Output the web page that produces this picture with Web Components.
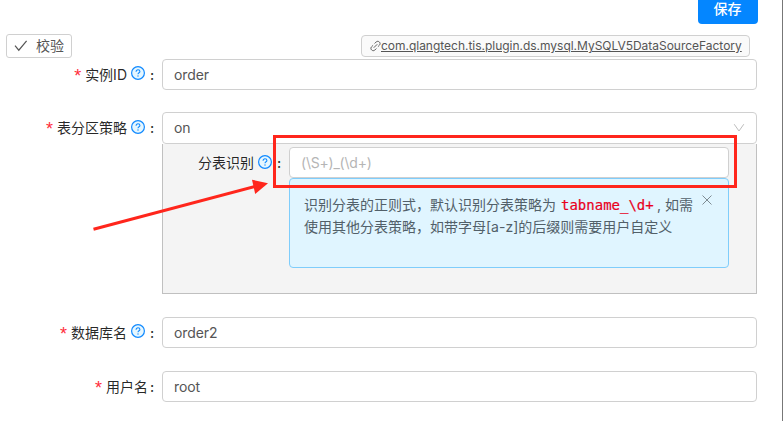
<!DOCTYPE html>
<html lang="zh-CN">
<head>
<meta charset="utf-8">
<title>数据源配置</title>
<style>
html, body { margin: 0; height: 100%; background: #fff; overflow: hidden; }
body { font: 14px/22px Inter, "Noto Sans CJK SC", sans-serif; color: rgba(0,0,0,.85); }
</style>
</head>
<body>
<ds-page></ds-page>
<script>
const define = (name, html) => {
  const t = document.createElement('template');
  t.innerHTML = html;
  customElements.define(name, class extends HTMLElement {
    constructor() {
      super();
      this.attachShadow({ mode: 'open' }).append(t.content.cloneNode(true));
    }
  });
};

define('help-icon', `
<style>:host{display:block;width:14px;height:14px} svg{display:block}</style>
<svg width="14" height="14" viewBox="0 0 14 14" fill="none">
<circle cx="7" cy="7" r="6.4" fill="#e6f7ff" stroke="#1089ff" stroke-width="1.2"/>
<path d="M5.1 5.7C5.1 4.5 5.9 3.8 7 3.8s1.9.7 1.9 1.7C8.9 6.8 7 6.8 7 8.3" stroke="#1089ff" stroke-width="1.1"/>
<circle cx="7" cy="10" r=".7" fill="#1089ff"/></svg>`);

define('text-box', `
<style>:host{display:flex;align-items:center;justify-content:space-between;box-sizing:border-box;height:31px;padding:0 11px;background:#fff;border:1px solid #d0d0d0;border-radius:4px;color:#555;letter-spacing:-.08px}
:host([tall]){height:32px}
:host([hint]){color:#b5b5b5;letter-spacing:-.22px}
svg{display:none}:host([tall]) svg{display:block}</style>
<slot></slot><svg width="12" height="10" viewBox="0 0 12 10" fill="none" stroke="#bdbdbd"><path d="M1.2 1.2 6 8l4.8-6.8"/></svg>`);

define('form-label', `
<style>:host{display:flex;justify-content:flex-end;align-items:center;height:32px;white-space:nowrap;box-sizing:border-box;padding-right:8px}
.star{display:none;color:#ff2d3b;width:7px;margin-right:4px;font:18px/20px "Liberation Sans",sans-serif;padding-top:1px}
:host([required]) .star{display:block}
help-icon{display:none;margin:-4px 3px 0 4px}:host([help]) help-icon{display:block}
:host([low]) help-icon{margin-top:-2px}
.colon{width:4px;margin-left:2px;font-weight:500}</style>
<span class="star">*</span><slot></slot><help-icon></help-icon><span class="colon">:</span>`);

define('form-row', `
<style>:host{display:grid;grid-template-columns:162px 595px}</style>
<slot name="label"></slot><slot></slot>`);

define('check-button', `
<style>:host{display:flex;align-items:center;box-sizing:border-box;width:66px;height:24px;padding-left:7px;gap:8px;border:1px solid #d0d0d0;border-radius:3px;color:#555}svg{flex:none}</style>
<svg width="14" height="12" viewBox="0 0 14 12" fill="none" stroke="#555" stroke-width="1.2"><path d="M1 5.7 4.8 10.2 12.6.9"/></svg><slot></slot>`);

define('save-button', `
<style>:host{display:flex;align-items:center;justify-content:center;box-sizing:border-box;width:60px;height:32px;padding-top:2px;background:#0486ff;color:#fff;border-radius:4px;font-weight:500}span{margin-left:-1px}</style><span><slot></slot></span>`);

define('plugin-tag', `
<style>:host{display:flex;align-items:center;box-sizing:border-box;width:389px;height:22px;padding-left:8px;background:#fafafa;border:1px solid #d0d0d0;border-radius:4px;color:#555;font-size:12px}
a{text-decoration:underline;letter-spacing:-.02px;white-space:nowrap}svg{flex:none}</style>
<svg width="11" height="12" viewBox="0 0 12 12" fill="none" stroke="#555" stroke-width="1"><path d="m5 3.3 1.8-1.8c2.3-2 5.6 1.2 3.6 3.5L8.6 6.8M7 8.7 5.2 10.5C2.9 12.5-.4 9.3 1.6 7L3.4 5.2M4.1 7.9l3.8-3.8"/></svg><a><slot></slot></a>`);

define('info-alert', `
<style>:host{display:flex;align-items:flex-start;box-sizing:border-box;height:90px;padding:15px 14px 0;background:#e0f5ff;border:1px solid #7fcdfb;border-radius:4px;color:#526069}
p{margin:0;width:386px;flex:none;white-space:nowrap}svg{margin-left:12px;margin-top:1px;flex:none}</style>
<p><slot></slot></p><svg width="10" height="10" viewBox="0 0 10 10" fill="none" stroke="#7e8b92"><path d="m.5.5 9 9m0-9-9 9"/></svg>`);

define('code-text', `
<style>:host{display:inline-block;width:93px;margin:0 3px 0 5px;color:#e8001c;font:14px/18px "DejaVu Sans Mono","Liberation Mono",monospace;-webkit-text-stroke:.2px #e8001c}</style><slot></slot>`);

define('nested-panel', `
<style>:host{display:grid;grid-template-columns:126px 440px;align-content:start;box-sizing:border-box;height:150px;padding-top:3px;background:#f4f4f4;border:1px solid #c0c0c0;border-top:0}</style>
<slot name="label"></slot><div><slot></slot></div>`);

define('red-marks', `
<style>:host{position:absolute;inset:0;pointer-events:none}svg{display:block}</style>
<svg width="783" height="421" fill="none"><rect x="274.5" y="136.5" width="461" height="50" stroke="#ff261c" stroke-width="3"/>
<path d="M93.5 229.3 256 186.3" stroke="#ff261c" stroke-width="3"/><path d="m252 179.7 16 3.5-12.8 10.8z" fill="#ff261c"/></svg>`);

define('ds-page', `
<style>:host{display:block;position:relative;box-sizing:border-box;width:783px;height:421px;border-right:1px solid #777;overflow:hidden}
header{display:flex;justify-content:flex-end;padding-right:24px;margin-top:-8px}
.tools{display:flex;justify-content:space-between;align-items:flex-start;padding:0 32px 0 6px;margin-top:10px;height:25px}
plugin-tag{margin-top:1px}
form-row + form-row{margin-top:22px}
</style>
<header><save-button>保存</save-button></header>
<div class="tools"><check-button>校验</check-button><plugin-tag>com.qlangtech.tis.plugin.ds.mysql.MySQLV5DataSourceFactory</plugin-tag></div>
<form-row><form-label slot="label" required help>实例ID</form-label><text-box>order</text-box></form-row>
<form-row style="margin-top:21px"><form-label slot="label" required help low>表分区策略</form-label><div><text-box tall>on</text-box>
<nested-panel><form-label slot="label" help low>分表识别</form-label><text-box hint>(\\S+)_(\\d+)</text-box>
<info-alert>识别分表的正则式，默认识别分表策略为<code-text>tabname_\\d+</code-text>, 如需<br>使用其他分表策略，如带字母[a-z]的后缀则需要用户自定义</info-alert></nested-panel></div></form-row>
<form-row style="align-items:start;margin-top:23px"><form-label slot="label" required help>数据库名</form-label><text-box>order2</text-box></form-row>
<form-row style="align-items:start"><form-label slot="label" required>用户名</form-label><text-box>root</text-box></form-row>
<red-marks></red-marks>`);
</script>
</body>
</html>
